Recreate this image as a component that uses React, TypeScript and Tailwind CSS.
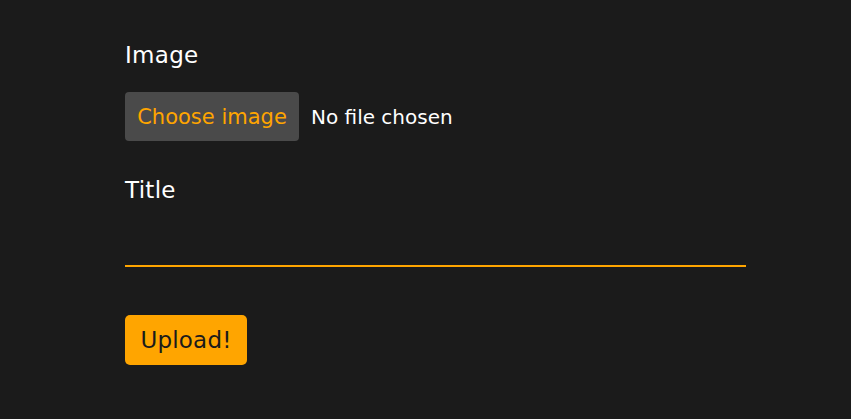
import React from "react";

const font = { fontFamily: '"DejaVu Sans", "Open Sans", sans-serif' };

const App = () => {
  return (
    <div
      className="min-h-[419px] w-full bg-[#1b1b1b] text-white"
      style={font}
    >
      <form className="flex flex-col w-[621px] ml-[125px] pt-[40px]">
        <label className="text-[23px] leading-[30px] tracking-[0.3px]">Image</label>
        <div className="flex items-center mt-[22px] gap-[12px]">
          <button
            type="button"
            className="h-[49px] w-[174px] rounded-[4px] bg-[#4a4a4a] text-[#ffa500] text-[21px] pt-[2px]"
          >
            Choose image
          </button>
          <span className="text-[20px]">No file chosen</span>
        </div>
        <label className="mt-[34px] text-[23px] leading-[30px] tracking-[0.3px]">Title</label>
        <input
          type="text"
          className="mt-[29px] h-[33px] w-[621px] bg-transparent border-b-2 border-[#ffa500] outline-none"
        />
        <div className="mt-[48px]">
          <button
            type="button"
            className="h-[50px] w-[122px] rounded-[5px] bg-[#ffa500] text-[#1b1b1b] text-[23px] tracking-[0.2px]"
          >
            Upload!
          </button>
        </div>
      </form>
    </div>
  );
};

export default App;
